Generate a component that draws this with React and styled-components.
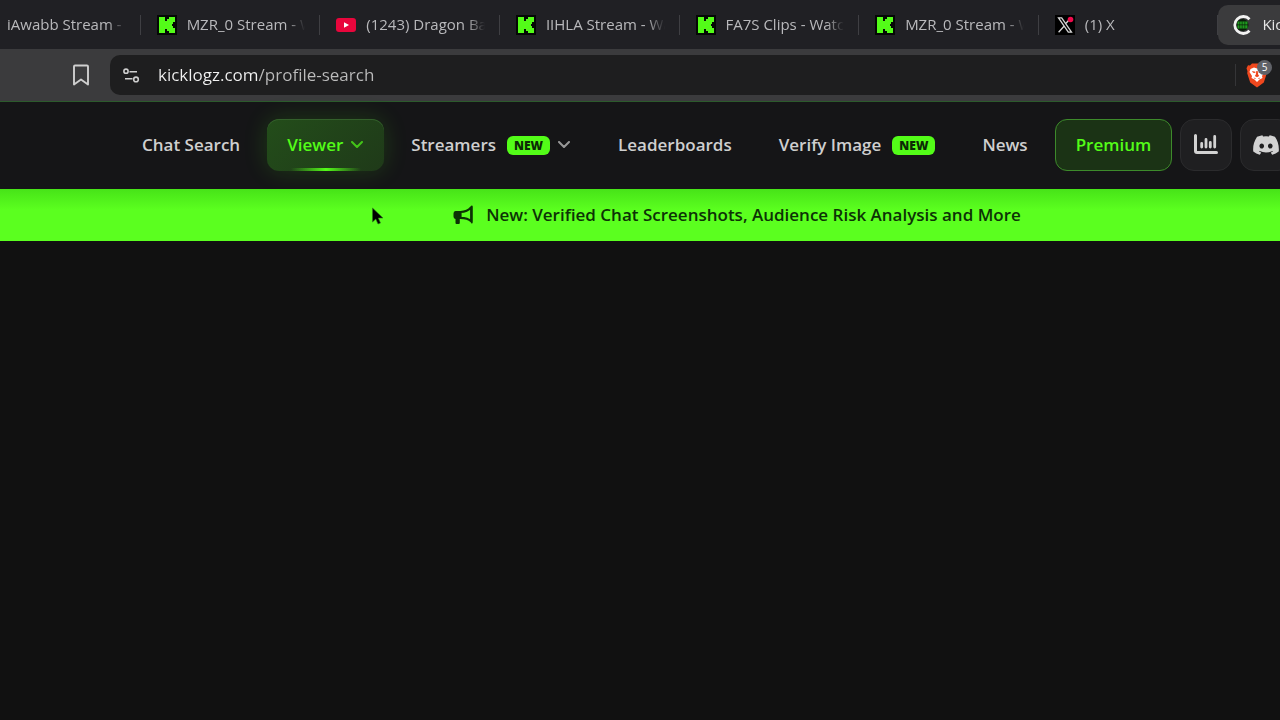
import React from 'react';
import styled, { createGlobalStyle, css } from 'styled-components';
import { FaDiscord } from 'react-icons/fa6';

const GlobalStyle = createGlobalStyle`
	* {
		box-sizing: border-box;
	}
	body {
		margin: 0;
		min-height: 100vh;
		overflow-x: hidden;
		background-color: #111111;
		color: #cfcfcf;
		font-family: 'Open Sans', 'Noto Sans', sans-serif;
	}
	button,
	input {
		font-family: inherit;
	}
`;

const Page = styled.div`
	position: relative;
	overflow: hidden;
`;

/* browser chrome */

const TabStrip = styled.div`
	display: flex;
	height: 49px;
	margin: 0 -116px 0 -39px;
	background-color: #202024;
`;

const Tab = styled.button`
	flex: 1 1 0;
	min-width: 0;
	display: flex;
	align-items: center;
	gap: 10px;
	padding: 0 14px 0 16px;
	border: 0;
	background: none;
	color: #b9b9bc;
	font-size: 15px;
	line-height: 24px;
	text-align: left;

	svg {
		flex: none;
	}

	&::after {
		content: '';
		flex: none;
		width: 1px;
		height: 20px;
		margin-right: -14px;
		margin-left: 4px;
		background-color: #3f3f43;
	}

	${(props) =>
		props.$active &&
		css`
			height: 40px;
			margin-top: 5px;
			padding-left: 14px;
			border-radius: 10px;
			background-color: #3b3b3d;
			color: #e6e6e6;

			&::after {
				display: none;
			}
		`}
`;

const TabTitle = styled.span`
	flex: 1;
	min-width: 0;
	padding-bottom: 2px;
	overflow: hidden;
	white-space: nowrap;
	mask-image: linear-gradient(to right, #000 85%, transparent);
`;

const Toolbar = styled.div`
	display: flex;
	align-items: center;
	gap: 18px;
	height: 52px;
	padding-left: 70px;
	background-color: #3b3b3d;
`;

const ToolButton = styled.button`
	display: flex;
	padding: 0;
	border: 0;
	background: none;
	color: #cfcfcf;
`;

const AddressBar = styled.div`
	flex: 1;
	display: flex;
	align-items: center;
	gap: 18px;
	height: 40px;
	padding: 0 12px;
	border-radius: 10px 0 0 10px;
	background-color: #1e1e1f;
`;

const AddressInput = styled.input`
	flex: 1;
	min-width: 0;
	padding: 0;
	border: 0;
	outline: 0;
	background: linear-gradient(to right, #f2f2f2 100px, #bcbcbc 100px) text;
	color: transparent;
	font-size: 17px;
	line-height: 24px;
`;

const Divider = styled.span`
	width: 1px;
	height: 22px;
	background-color: #353537;
`;

const Shield = styled.button`
	position: relative;
	display: flex;
	margin-left: -8px;
	padding: 0;
	border: 0;
	background: none;
`;

const ShieldCount = styled.span`
	position: absolute;
	top: -2px;
	right: -4px;
	width: 15px;
	height: 15px;
	border-radius: 8px;
	background-color: #606268;
	color: #ffffff;
	font-size: 10px;
	line-height: 15px;
	text-align: center;
`;

/* site header */

const Header = styled.header`
	padding: 17px 0 18px 122px;
	border-top: 1px solid #2c5a2c;
	background-color: #151517;
`;

const Nav = styled.nav`
	display: flex;
	align-items: center;
	gap: 7px;
`;

const navItem = css`
	position: relative;
	flex: none;
	display: flex;
	align-items: center;
	height: 52px;
	padding: 0 20px;
	border: 0;
	border-radius: 12px;
	background: none;
	color: #cfcfcf;
	font-size: 17px;
	font-weight: 600;
	line-height: 24px;
	text-decoration: none;
	white-space: nowrap;
`;

const NavLink = styled.a`
	${navItem}

	${(props) =>
		props.$premium &&
		css`
			border: 1px solid #3d8a2b;
			background-color: #1b3315;
			color: #53fc18;
		`}
`;

const NavButton = styled.button`
	${navItem}

	${(props) =>
		props.$active &&
		css`
			background: linear-gradient(135deg, #234d1a, #1f3a19);
			box-shadow: 0 0 24px rgba(83, 252, 24, 0.16), inset 0 1px 0 #33602b;
			color: #53fc18;

			&::after {
				content: '';
				position: absolute;
				right: 20%;
				bottom: 0;
				left: 20%;
				height: 3px;
				background: linear-gradient(to right, transparent, #53fc18, transparent);
			}
		`}
`;

const NewBadge = styled.span`
	margin-left: 11px;
	padding: 0 7px;
	border-radius: 6px;
	background-color: #53fc18;
	color: #0b2a05;
	font-size: 12px;
	font-weight: 800;
	line-height: 19px;
`;

const Caret = styled.svg`
	margin-left: 7px;
	opacity: 0.7;
`;

const IconLink = styled.a`
	flex: none;
	display: flex;
	align-items: center;
	justify-content: center;
	width: 52px;
	height: 52px;
	margin-left: 1px;
	border: 1px solid #2b2b2d;
	border-radius: 14px;
	background-color: #1f1f21;
	color: #d2d2d2;
`;

const Banner = styled.a`
	display: flex;
	align-items: center;
	justify-content: center;
	gap: 13px;
	min-height: 52px;
	padding-left: 194px;
	background: linear-gradient(to bottom, #47e318, #5bff1f 40%);
	color: #0c3205;
	font-size: 17px;
	font-weight: 600;
	line-height: 24px;
	text-decoration: none;
`;

const Pointer = styled.svg`
	position: absolute;
	top: 207px;
	left: 371px;
`;

const KickIcon = () => (
	<svg width="20" height="20" viewBox="0 0 20 20" aria-hidden="true">
		<path fill="#050805" d="M0 0h20v20H0z" />
		<path
			fill="#53fc18"
			d="M2 2h6v4h2V4h2V2h6v5h-2v2h-1v2h1v2h2v5h-6v-2h-2v-2H8v4H2z"
		/>
	</svg>
);

const YoutubeIcon = () => (
	<svg width="20" height="20" viewBox="0 0 20 20" aria-hidden="true">
		<rect y="3" width="20" height="14" rx="3" fill="#e8063c" />
		<path fill="#fff" d="M8 7.2v5.6l5-2.8z" />
	</svg>
);

const XIcon = () => (
	<svg width="20" height="20" viewBox="0 0 20 20" aria-hidden="true">
		<path fill="#000" d="M0 0h20v20H0z" />
		<path
			fill="none"
			stroke="#d5d5d5"
			strokeWidth="1.3"
			d="M3.5 2.8h3.2l9.8 14.4h-3.2zM16 2.8l-5.4 6M9 11.2l-5.4 6"
		/>
		<circle cx="15.5" cy="4.5" r="2.8" fill="#f00a4c" />
	</svg>
);

const KicklogzIcon = () => (
	<svg width="20" height="20" viewBox="0 0 20 20" aria-hidden="true">
		<path
			fill="none"
			stroke="#f2f2f2"
			strokeWidth="2.8"
			d="M17.5 4.2A8.500 8.500 0 1 0 17.500 15.800"
		/>
		<circle cx="10.500" cy="10" r="6" fill="#0a1c0a" />
		<path fill="#1f9a1f" d="M5.500 6.500h10v3h-10zM5.500 10.200h10v3.200h-10z" />
		<path
			stroke="#0a1c0a"
			strokeWidth=".6"
			d="M7.700 6.500v7M10.200 6.500v7M12.800 6.500v7"
		/>
	</svg>
);

const BookmarkIcon = () => (
	<svg width="22" height="24" viewBox="0 0 22 24" aria-hidden="true">
		<path
			fill="none"
			stroke="currentColor"
			strokeWidth="1.9"
			strokeLinejoin="round"
			d="M5 2.5h12a1 1 0 0 1 1 1v18l-7-5-7 5v-18a1 1 0 0 1 1-1z"
		/>
	</svg>
);

const SettingsIcon = () => (
	<svg width="18" height="18" viewBox="0 0 18 18" aria-hidden="true">
		<g fill="none" stroke="currentColor" strokeWidth="1.6">
			<circle cx="4" cy="5.2" r="2.100" />
			<circle cx="14" cy="13.400" r="2.300" />
			<path d="M7.500 5.700H15M3 12.800h7.500" />
		</g>
	</svg>
);

const BraveIcon = () => (
	<svg width="22" height="26" viewBox="0 0 22 26" aria-hidden="true">
		<path
			fill="#f0481e"
			d="M6 1.5h10l2 2 2-.3 1.5 3-1 3 .3 2-3 9.300L11 25.500 4.200 20.500l-3-9.300.3-2-1-3 1.500-3 2 .3z"
		/>
		<path
			fill="#fff"
			d="M4.500 7 8 5.500l3 1 3-1L17.500 7l1 3-2.500 4 .5 2-3 1.500L11 20l-2.500-2.500-3-1.500.5-2-2.500-4z"
		/>
		<path
			fill="#f0481e"
			d="m6 9 3.500.7-.3 1.300L7 10.800zM16 9l-3.500.7.3 1.300 2.200-.2zM10.300 9h1.400l.5 3.500 1 1.500-2.200 1.300L8.800 14l1-1.500zM7.500 15.500l2.500.8-1 .8zM14.500 15.500l-2.500.8 1 .8z"
		/>
	</svg>
);

const CaretIcon = () => (
	<Caret width="14" height="14" viewBox="0 0 14 14" aria-hidden="true">
		<path
			fill="none"
			stroke="currentColor"
			strokeWidth="2"
			strokeLinecap="round"
			strokeLinejoin="round"
			d="m2 4 5 5 5-5"
		/>
	</Caret>
);

const ChartIcon = () => (
	<svg width="24" height="24" viewBox="0 0 24 24" aria-hidden="true">
		<g fill="none" stroke="currentColor" strokeLinecap="round">
			<path
				strokeWidth="3"
				strokeLinejoin="round"
				d="M1.500 2.500v15.500a1.500 1.500 0 0 0 1.500 1.500h19.500"
			/>
			<path strokeWidth="2.800" d="M7.700 10.500v3.500M12 6.500v7.500M16.300 9.500v4.500M20.700 3.500v10.500" />
		</g>
	</svg>
);

const BullhornIcon = () => (
	<svg width="20" height="20" viewBox="0 0 20 20" aria-hidden="true">
		<path
			fill="currentColor"
			d="M2.500 6H8v8H6.800v4a1 1 0 0 1-1 1H3.500a1 1 0 0 1-1-1v-4A2.500 2.500 0 0 1 .5 11.500v-3A2.500 2.500 0 0 1 2.500 6z"
		/>
		<path
			fill="none"
			stroke="currentColor"
			strokeWidth="2.200"
			strokeLinejoin="round"
			d="M7.500 7c4 0 8-1.500 10.700-4.700v14C15.500 13.500 11.500 12.800 7.500 12.800z"
		/>
		<path
			stroke="currentColor"
			strokeWidth="1.800"
			strokeLinecap="round"
			d="M18.800 1.500v16"
		/>
	</svg>
);

const tabs = [
	{ title: 'iAwabb Stream - Watch', icon: KickIcon },
	{ title: 'MZR_0 Stream - Watch', icon: KickIcon },
	{ title: '(1243) Dragon Ball', icon: YoutubeIcon },
	{ title: 'IIHLA Stream - Watch', icon: KickIcon },
	{ title: 'FA7S Clips - Watch', icon: KickIcon },
	{ title: 'MZR_0 Stream - Watch', icon: KickIcon },
	{ title: '(1) X', icon: XIcon },
	{ title: 'Kicklogz', icon: KicklogzIcon, active: true },
];

const App = () => (
	<Page>
		<GlobalStyle />
		<TabStrip>
			{tabs.map(({ title, icon: Icon, active }, i) => (
				<Tab key={i} $active={active}>
					<Icon />
					<TabTitle>{title}</TabTitle>
				</Tab>
			))}
		</TabStrip>
		<Toolbar>
			<ToolButton aria-label="Bookmark this page">
				<BookmarkIcon />
			</ToolButton>
			<AddressBar>
				<ToolButton aria-label="Site settings">
					<SettingsIcon />
				</ToolButton>
				<AddressInput
					aria-label="Address"
					defaultValue="kicklogz.com/profile-search"
				/>
				<Divider />
				<Shield aria-label="Shields">
					<BraveIcon />
					<ShieldCount>5</ShieldCount>
				</Shield>
			</AddressBar>
		</Toolbar>
		<Header>
			<Nav>
				<NavLink href="#chat">Chat Search</NavLink>
				<NavButton $active>
					Viewer
					<CaretIcon />
				</NavButton>
				<NavButton>
					Streamers
					<NewBadge>NEW</NewBadge>
					<CaretIcon />
				</NavButton>
				<NavLink href="#leaderboards">Leaderboards</NavLink>
				<NavLink href="#verify">
					Verify Image
					<NewBadge>NEW</NewBadge>
				</NavLink>
				<NavLink href="#news">News</NavLink>
				<NavLink href="#premium" $premium>
					Premium
				</NavLink>
				<IconLink href="#stats" aria-label="Stats">
					<ChartIcon />
				</IconLink>
				<IconLink href="#discord" aria-label="Discord">
					<FaDiscord size={28} />
				</IconLink>
			</Nav>
		</Header>
		<Banner href="#new">
			<BullhornIcon />
			<span>New: Verified Chat Screenshots, Audience Risk Analysis and More</span>
		</Banner>
		<Pointer width="14" height="20" viewBox="0 0 14 20" aria-hidden="true">
			<path
				fill="#000"
				stroke="#2f7a1c"
				strokeWidth=".6"
				d="M1.500 1v14l3.300-3 2.200 5 2.500-1-2.200-5H12z"
			/>
		</Pointer>
	</Page>
);

export default App;
